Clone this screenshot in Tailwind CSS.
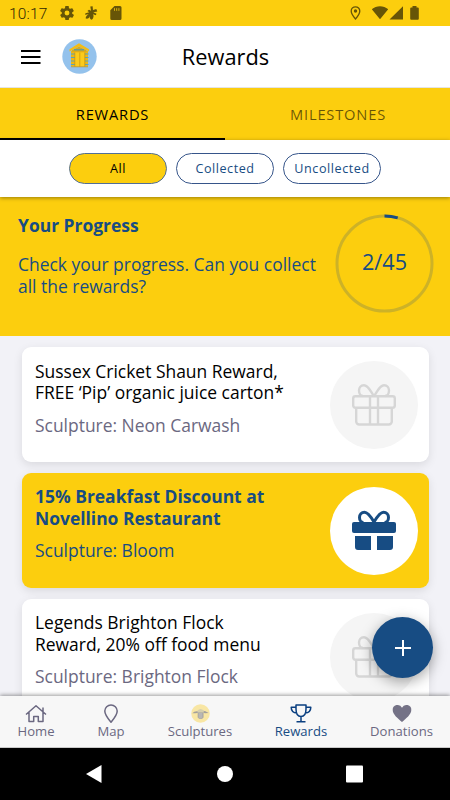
<!DOCTYPE html>
<html lang="en">
<head>
<meta charset="utf-8">
<title>Rewards</title>
<script src="https://cdn.jsdelivr.net/npm/@tailwindcss/browser@4"></script>
</head>
<body class="w-[450px] h-[800px] overflow-hidden font-['Open_Sans',sans-serif] bg-[#f2f2f7] text-black">
<svg class="hidden">
  <symbol id="gift" viewBox="0 0 44 42" fill="none" stroke="currentColor" stroke-width="2.4" stroke-linejoin="round">
    <rect x="1.2" y="12.2" width="41.6" height="11.6" rx="2.2"/>
    <path d="M4.2 24V37.500a3 3 0 0 0 3 3H36.800a3 3 0 0 0 3-3V24M18 12.500V40M26 12.500V40"/>
    <path d="M22 12C18.500 7.500 16.500 1.200 12 1.200C8.500 1.200 7 4 7 6.600C7 9.500 8.500 12 11 12M22 12C25.500 7.500 27.500 1.200 32 1.200C35.500 1.200 37 4 37 6.600C37 9.500 35.500 12 33 12"/>
  </symbol>
</svg>
<div class="flex flex-col h-full">
  <div class="h-[26px] shrink-0 bg-[#fcce0e] flex items-center relative text-[#675507]">
    <span class="ml-[9px] w-[51px] text-[15.500px] leading-[26px] pt-px tracking-[0.200px] font-light font-['Roboto',sans-serif] text-[#2f2703]">10:17</span>
    <svg class="w-[14px] h-[14px]" viewBox="2 2 20 20" fill="currentColor"><path d="M19.400 13c.1-.7.1-1.300 0-2l2.100-1.600c.2-.2.300-.4.100-.7l-2-3.400c-.1-.2-.4-.3-.6-.2l-2.500 1a7 7 0 0 0-1.700-1L14.500 2.500a.5.500 0 0 0-.5-.5h-4a.5.500 0 0 0-.5.500l-.4 2.600a7 7 0 0 0-1.700 1l-2.500-1c-.2-.1-.5 0-.6.2l-2 3.400c-.1.3 0 .5.200.7L4.600 11a8 8 0 0 0 0 2l-2.100 1.600c-.2.200-.3.400-.1.700l2 3.400c.1.200.4.300.6.200l2.500-1a7 7 0 0 0 1.700 1l.4 2.600c0 .3.200.5.500.5h4c.3 0 .5-.2.500-.5l.4-2.600a7 7 0 0 0 1.700-1l2.500 1c.2.100.5 0 .6-.2l2-3.400c.1-.3.100-.5-.1-.7zM12 15.500a3.500 3.500 0 1 1 0-7 3.500 3.500 0 0 1 0 7z"/></svg>
    <svg class="ml-[10px] w-[15px] h-[16px]" viewBox="0 0 15 16" fill="currentColor"><path d="M6.300 1.500L8.600 1.300 9 5 12.300 4 13.300 6.500 9.300 7.300 12.500 8.700 11.800 10.300 9 9.200C10 10.500 9.800 13 7.800 14.800C6 14.300 5.400 12.500 5.700 11C5.400 13 4 14 1.700 13.500C1.500 11.500 3 10 4.700 9.200L1 9.800 1.500 8.300 5.300 7.300 3.400 6 5 4.700 7 5.700z"/></svg>
    <svg class="absolute left-[109.500px] top-[6px]" width="12" height="14" viewBox="0 0 12 14"><path fill="currentColor" d="M4.500 0H10a1.500 1.500 0 0 1 1.500 1.500v11A1.500 1.500 0 0 1 10 14H1.800A1.500 1.500 0 0 1 .3 12.500V4.300z"/><path d="M4.500 2.200v2.600M6.700 2.200v2.600M8.900 2.200v2.600" stroke="#fcce0e" stroke-width=".8"/></svg>
    <svg class="absolute left-[350px] top-[6px]" width="11" height="14" viewBox="0 0 11 14"><path d="M5.500 .8A4.300 4.300 0 0 0 1.200 5.100C1.200 8.300 5.500 13 5.500 13S9.800 8.300 9.800 5.100A4.300 4.300 0 0 0 5.500.8z" fill="none" stroke="currentColor" stroke-width="1.300"/><circle cx="5.500" cy="5" r="1.700" fill="currentColor"/></svg>
    <svg class="absolute left-[371px] top-[6px]" width="50" height="14" viewBox="0 0 50 14" fill="currentColor"><path d="M.8 3.300C5.500-.8 12.500-.8 17.200 3.300L9 13.200zM18.500 13.500L32 .2V13.500zM41.500 0h4v1.400h1.300q1 0 1 1v10.400q0 1-1 1h-6.600q-1 0-1-1V2.400q0-1 1-1h1.300z"/></svg>
  </div>
  <header class="h-[62px] shrink-0 bg-white border-b border-[#e4e4e4] relative flex items-center justify-center">
    <svg class="absolute left-[21px] top-[24px]" width="20" height="14" viewBox="0 0 20 14" stroke="#000" stroke-width="2"><path d="M0 1h19.500M0 7h19.500M0 13h19.500"/></svg>
    <svg class="absolute left-[61.500px] top-[13px]" width="35" height="35" viewBox="0 0 35 35"><circle cx="17.500" cy="17.500" r="17.200" fill="#94c2ec"/><path d="M9 12h17v15.500H9z" fill="#edb718"/><path d="M9 15h4M9 18.500h4M9 22h4M9 25.500h4M23 15h3.500M23 18.500h3.500M23 22h3.500M23 25.500h3.500" stroke="#5ba5b7" stroke-width="1.200"/><path d="M12.800 13.500h10v14h-10z" fill="#fbcb1c"/><path d="M17.800 13.500v14M12.800 13.500v14M22.800 13.500v14M9 27.800h17" stroke="#b8860f" stroke-width=".6"/><path d="M17 4.300L7.500 10.200v2.300L17 7.600l10 5v-2.400z" fill="#f5bd13"/><path d="M17 7.800L10 11.300v1.500h14.500v-1.500z" fill="#d7a81d"/><path d="M12 10.800h10" stroke="#4f9aac" stroke-width="1.200"/></svg>
    <h1 class="pl-px text-[21.800px] leading-[30px]">Rewards</h1>
  </header>
  <div class="h-[52px] shrink-0 bg-[#fcce0e] grid grid-cols-2 text-center text-[14.700px] leading-[52px] tracking-[0.800px]">
    <div class="border-b-2 border-black h-[52px]">REWARDS</div>
    <div class="pl-px text-black/60">MILESTONES</div>
  </div>
  <div class="h-[57px] shrink-0 bg-white flex justify-center gap-[9px] pt-[13px] text-[12.600px] leading-[29px] tracking-[0.550px] text-center text-[#174c83] relative z-10 shadow-[0_1px_4px_rgba(0,0,0,0.4)]">
    <div class="w-[98px] h-[31px] rounded-full border border-[#526f96] bg-[#fcce0e] text-black">All</div>
    <div class="w-[98px] h-[31px] rounded-full border border-[#36558a]">Collected</div>
    <div class="w-[98px] h-[31px] rounded-full border border-[#36558a]">Uncollected</div>
  </div>
  <section class="h-[139px] shrink-0 bg-[#fcce0e] text-[#174c83] flex justify-between pl-[18px] pr-[16px]">
    <div class="pt-[17px]">
      <h2 class="font-bold text-[17.450px] leading-[22px]">Your Progress</h2>
      <p class="mt-[18px] text-[17.450px] leading-[21.600px]">Check your progress. Can you collect<br>all the rewards?</p>
    </div>
    <div class="mt-[17px] w-[99px] h-[99px] relative flex items-center justify-center">
      <svg class="absolute inset-0" width="99" height="99" viewBox="0 0 99 99" fill="none" stroke-width="3"><circle cx="49.500" cy="49.500" r="47.500" stroke="#cdb227"/><path d="M49.500 2A47.500 47.500 0 0 1 62.700 3.900" stroke="#174c83"/></svg>
      <span class="text-[21.600px] leading-[30px] -mt-[4px]">2/45</span>
    </div>
  </section>
  <main class="h-[360px] shrink-0 overflow-hidden px-[22px] pr-[21px] pt-[11px] flex flex-col gap-[11px] text-[17.450px] leading-[21.600px]">
    <article class="h-[115px] shrink-0 rounded-[9px] bg-white shadow-[0_3px_10px_rgba(0,0,0,0.1)] flex justify-between pl-[13px] pr-[11px] pt-[13.500px]">
      <div><h3>Sussex Cricket Shaun Reward,<br>FREE ‘Pip’ organic juice carton*</h3><p class="mt-[11px] text-[#6b6881]">Sculpture: Neon Carwash</p></div>
      <div class="mt-[0.500px] w-[88px] h-[88px] rounded-full bg-[#f5f5f5] text-[#d6d6d6] flex items-center justify-center"><svg width="44" height="42"><use href="#gift"/></svg></div>
    </article>
    <article class="h-[115px] shrink-0 rounded-[9px] bg-[#fcce0e] text-[#174c83] shadow-[0_3px_10px_rgba(0,0,0,0.1)] flex justify-between pl-[13px] pr-[11px] pt-[13px]">
      <div><h3 class="font-bold">15% Breakfast Discount at<br>Novellino Restaurant</h3><p class="mt-[11px]">Sculpture: Bloom</p></div>
      <div class="mt-[0.500px] w-[88px] h-[88px] rounded-full bg-white flex items-center justify-center"><svg class="-mt-[1px]" width="44" height="40" viewBox="0 0 44 40" fill="currentColor"><rect y="12" width="44" height="11" rx="2"/><path d="M3 26H19V40H6a3 3 0 0 1-3-3zM25 26H41V37a3 3 0 0 1-3 3H25z"/><path fill="none" stroke="currentColor" stroke-width="3" d="M22 12C19 7 16 2.300 12.500 2.300C9.500 2.300 7.500 4.700 7.500 7.500C7.500 10 9 12.500 11.500 12.500M22 12C25 7 28 2.300 31.500 2.300C34.500 2.300 36.500 4.700 36.500 7.500C36.500 10 35 12.500 32.500 12.500"/></svg></div>
    </article>
    <article class="h-[115px] shrink-0 rounded-[9px] bg-white shadow-[0_3px_10px_rgba(0,0,0,0.1)] flex justify-between pl-[13px] pr-[11px] pt-[13px]">
      <div><h3>Legends Brighton Flock<br>Reward, 20% off food menu</h3><p class="mt-[11px] text-[#6b6881]">Sculpture: Brighton Flock</p></div>
      <div class="mt-[1px] w-[88px] h-[88px] rounded-full bg-[#f5f5f5] text-[#d6d6d6] flex items-center justify-center"><svg width="44" height="42"><use href="#gift"/></svg></div>
    </article>
  </main>
  <nav class="h-[52px] shrink-0 bg-[#f7f7f7] border-b border-[#c9c9c9] relative z-20 shadow-[0_-1px_4px_rgba(0,0,0,0.4)] flex text-[13.100px] leading-[18px] text-[#6b6881] text-center">
    <div class="w-[72px] pt-[8px] flex flex-col items-center"><svg width="22" height="19" viewBox="0 0 22 19" fill="none" stroke="currentColor" stroke-width="1.500" stroke-linejoin="round"><path d="M1 10.500L11 1.700 21 10.500M4 8.300V17.500H8.700V12.500H13.300V17.500H18V8.300M18 7.500V3.500"/></svg><span class="-mt-[1px]">Home</span></div>
    <div class="w-[78px] pt-[8px] flex flex-col items-center"><svg width="16" height="19" viewBox="0 0 16 19" fill="none" stroke="currentColor" stroke-width="1.500"><path d="M8 .9A6.200 6.200 0 0 0 1.800 7C1.800 11 5.500 15.200 8 18.200C10.500 15.200 14.200 11 14.200 7A6.200 6.200 0 0 0 8 .9z"/></svg><span class="-mt-[1px]">Map</span></div>
    <div class="w-[100px] pt-[8px] flex flex-col items-center"><svg width="19" height="19" viewBox="0 0 19 19"><circle cx="9.500" cy="9.500" r="9.300" fill="#f8e6a4"/><path d="M1.300 9.200Q3.500 6.800 7 7.300L10 6.500Q15 6.800 17.700 9L14 9.300 12.500 8.700V13.500Q9.700 16.500 6.700 13.500V9L4 9.300z" fill="#a3a09c"/><path d="M6.500 6.500Q9.500 3.500 12.800 6.500V8.500H6.500z" fill="#d6cfae"/><path d="M7.500 9h4v5q-2 1.300-4 0z" fill="#b9b7b5"/></svg><span class="-mt-[1px]">Sculptures</span></div>
    <div class="w-[102px] pt-[8px] flex flex-col items-center text-[#174c83]"><svg class="text-[#0a3f80]" width="22" height="19" viewBox="0 0 22 19" fill="none" stroke="currentColor" stroke-width="1.500" stroke-linejoin="round"><path d="M6 1h10V5C16 9.500 14 12.500 11 12.500S6 9.500 6 5zM6 3.200H1.200C1.200 7 3 8.800 7 9M16 3.200h4.800C20.800 7 19 8.800 15 9M11 12.500V17.500M6.500 17.800h9"/></svg><span class="-mt-[1px]">Rewards</span></div>
    <div class="w-[98px] pt-[8px] pl-px flex flex-col items-center"><svg width="20" height="19" viewBox="0 0 20 19" fill="#747286"><path d="M10 18C6 14.500.7 10.500.7 6A4.900 4.900 0 0 1 10 3.700 4.900 4.900 0 0 1 19.300 6C19.300 10.500 14 14.500 10 18z"/></svg><span class="-mt-[1px]">Donations</span></div>
  </nav>
  <div class="h-[52px] shrink-0 bg-black">
    <svg width="450" height="52" fill="#fff"><path d="M86 26L101.500 17V35z"/><circle cx="225" cy="26" r="8"/><rect x="346" y="17.500" width="17" height="17" rx="1"/></svg>
  </div>
</div>
<button aria-label="Add" class="absolute z-10 left-[372px] top-[617px] w-[61px] h-[61px] rounded-full bg-[#174c83] shadow-[0_4px_14px_rgba(0,0,0,0.35)] flex items-center justify-center"><svg width="16" height="16" stroke="#fff" stroke-width="2"><path d="M8 0V16M0 8H16"/></svg></button>
</body>
</html>
